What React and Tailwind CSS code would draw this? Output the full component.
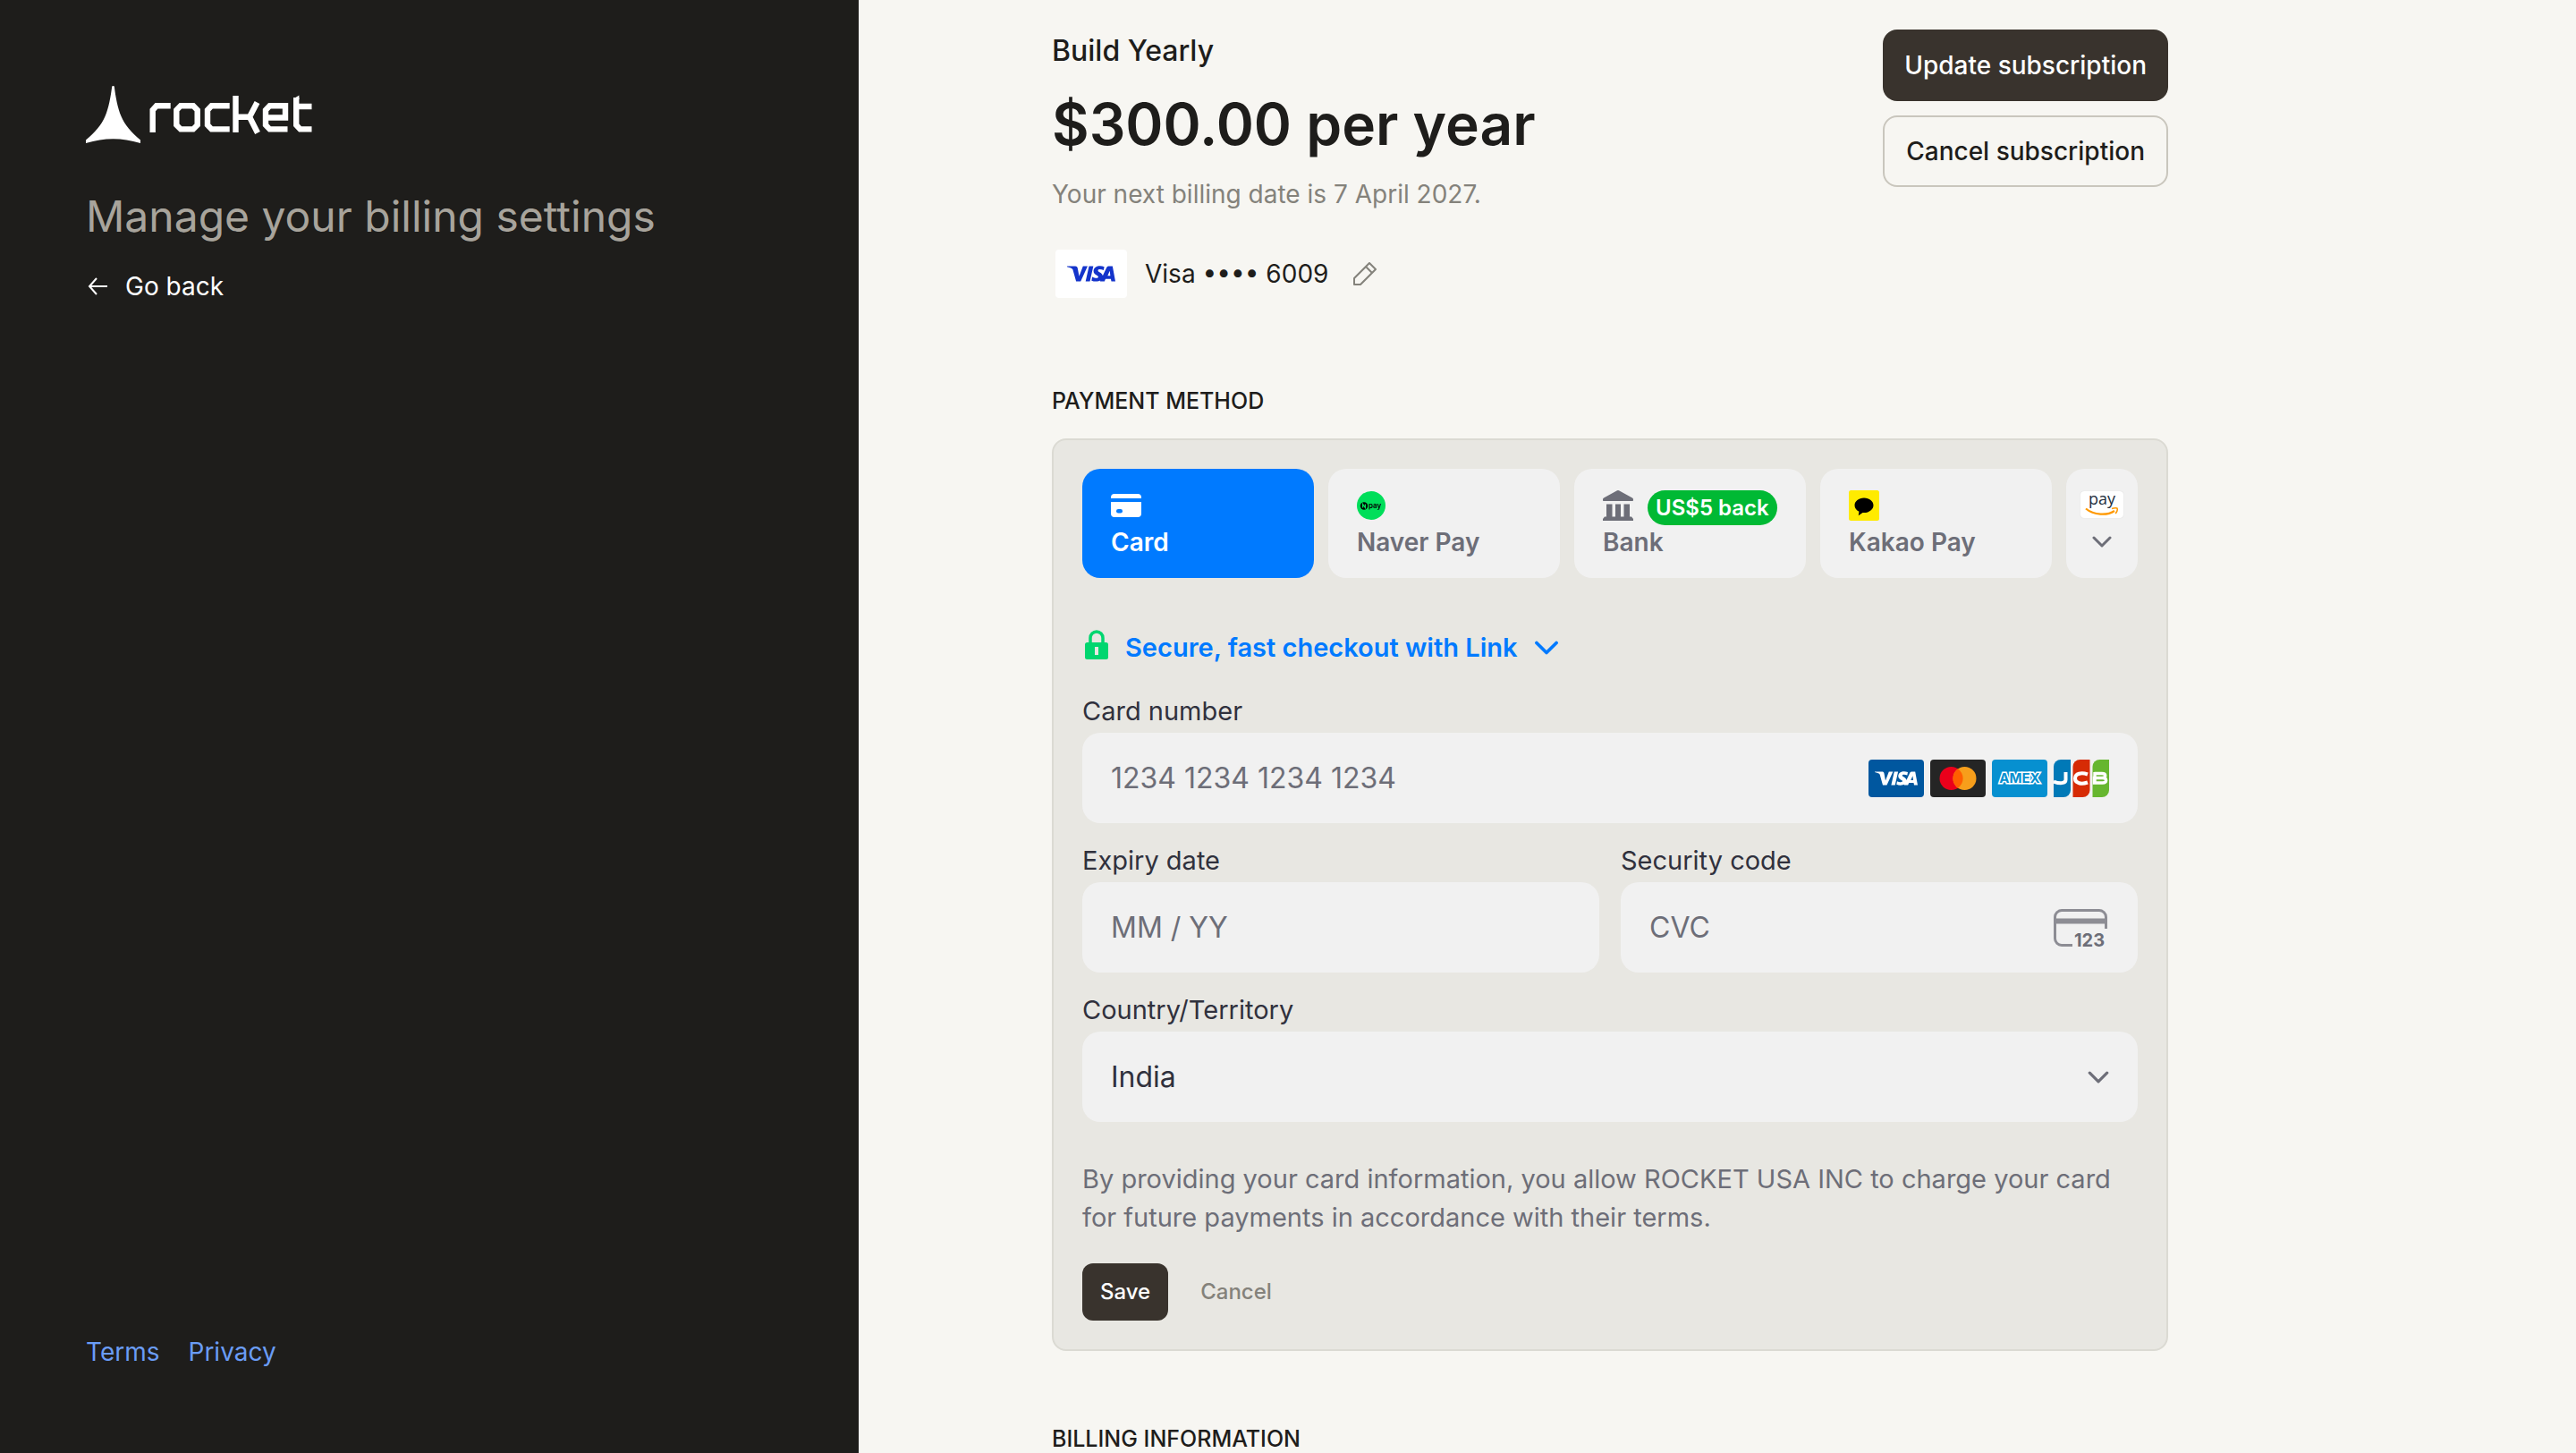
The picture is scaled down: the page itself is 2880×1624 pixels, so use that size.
function Chevron({ className }) {
  return (
    <svg viewBox="0 0 22 13" className={className} fill="none" stroke="currentColor" strokeWidth="3" strokeLinecap="round" strokeLinejoin="round" aria-hidden="true">
      <path d="M2 2l9 9 9-9" />
    </svg>
  );
}

function RocketLogo() {
  return (
    <svg viewBox="0 0 253 64" className="h-16 w-[253px]" fill="#fff" role="img" aria-label="rocket">
      <path d="M29.200.8C29.500-.3 31.500-.3 31.800.8 33.200 12 35.500 25 39.500 34c4 9.500 11 17.500 21.500 26.500V64c-11-3-20-4.700-30.500-4.700S11 61 0 64v-3.500C10.500 51.500 17.500 43.500 21.500 34 25.500 25 27.800 12 29.200.8Z" />
      <g fill="none" stroke="#fff" strokeWidth="6.400">
        <path d="M74.700 52V27L79 22.300H94.700" />
        <path d="M106 22.300H120L124.700 27V43.700L120 48.400H106L101.300 43.700V27Z" />
        <path d="M160.700 22.300H140.500L136 27V43.700L140.500 48.400H160.700" />
        <path d="M167.500 11V52M168 34.700H184M191.500 18.500L183 34.700 192 52.500" />
        <path d="M225.500 48.400H205.500L201 43.700V27L205.500 22.300H223V35.500H202" />
        <path d="M252.500 23H236M252.500 48.400H239.500L235.200 43.700V13" />
      </g>
      <path d="M232 14.500L238.400 10.500V15H232Z" />
    </svg>
  );
}

function VisaMark({ className }) {
  return (
    <svg viewBox="0 0 48 16" className={className} fill="currentColor" aria-hidden="true">
      <path d="M0 .5h8.200c1.200 0 2 .6 2.300 1.900L12 10.500 15.800.5h4.600L13.500 15.500H9L5.600 3.600C4.500 2.300 2 1.500 0 1.100ZM21.800.5h4.300l-3.400 15h-4.300ZM37 1l-.7 3.500c-3-1.300-5.600-1-5.600.3 0 1.500 4.800 2 4.800 5.700 0 5-6.500 6.200-11.200 4.300l.7-3.600c3.200 1.600 6 1.300 6-.1 0-1.700-4.700-1.900-4.700-5.700C26.300.4 32.400-.8 37 1ZM41.600.5h3.600L48 15.500h-4l-.5-2.400h-5.300l-1 2.400h-4.400L39.200 2c.4-1 1.200-1.500 2.400-1.500Zm.8 4.700-2.100 4.900H43Z" />
    </svg>
  );
}

function CardIcon() {
  return (
    <svg viewBox="0 0 34 26" className="h-[26px] w-[34px]" aria-hidden="true">
      <path fill="#fff" d="M0 5V4a4 4 0 0 1 4-4h26a4 4 0 0 1 4 4v1ZM0 9h34v13a4 4 0 0 1-4 4H4a4 4 0 0 1-4-4Z" />
      <rect x="6" y="17" width="7" height="4.500" rx="2.200" fill="#007aff" />
    </svg>
  );
}

function NaverIcon() {
  return (
    <svg viewBox="0 0 32 32" className="size-8" aria-hidden="true">
      <circle cx="16" cy="16" r="16" fill="#00de5a" />
      <circle cx="8" cy="16.500" r="4.200" fill="#000" />
      <path d="M6.600 18.500v-4l2.800 4v-4" fill="none" stroke="#00de5a" strokeWidth="1.300" />
      <text x="13" y="18.700" fill="#000" className="font-['Inter',sans-serif] text-[8px] font-semibold">pay</text>
    </svg>
  );
}

function BankIcon() {
  return (
    <svg viewBox="0 0 34 34" className="size-[34px]" fill="#6d6e78" aria-hidden="true">
      <path d="M16 .3a2 2 0 0 1 2 0l15 8.200c.7.400 1 .9 1 1.500v1c0 .6-.4 1-1 1H1c-.6 0-1-.4-1-1v-1c0-.6.300-1.100 1-1.500ZM4 15.500h6.500V30H4ZM14 15.500h6V30h-6ZM23.500 15.500H30V30h-6.500ZM2 29.500h30l2 2.500v2H0v-2Z" />
    </svg>
  );
}

function KakaoIcon() {
  return (
    <svg viewBox="0 0 34 34" className="size-[34px]" aria-hidden="true">
      <rect width="34" height="34" rx="2.500" fill="#ffeb00" />
      <path d="M17 8.500c6 0 10.500 3.700 10.500 8.200S23 25 17 25h-1.500l-4.700 3.200.6-4.500C8.300 22.300 6.500 19.700 6.500 16.700c0-4.500 4.500-8.200 10.500-8.200Z" />
    </svg>
  );
}

function AmazonPayIcon() {
  return (
    <span className="flex h-[30px] w-12 flex-col items-center rounded-sm bg-white shadow-[0_0_1px_#c8c8c8]">
      <span className="h-[18px] font-['Open_Sans',sans-serif] text-[18px] leading-[17px] text-[#232f3e]">pay</span>
      <svg viewBox="0 0 38 9" className="h-[9px] w-[38px]" fill="none" stroke="#ff9900" strokeWidth="2.200" aria-hidden="true">
        <path d="M1 1.500C10 9 25 9.500 33 4" />
        <path d="M30 1.500c3-1 6.500-.8 6-.2.600 1-.2 3.500-1.800 5.700" strokeWidth="1.600" />
      </svg>
    </span>
  );
}

function CardBrands() {
  return (
    <span className="flex gap-[7px]" aria-hidden="true">
      <span className="flex h-[42px] w-[62px] items-center justify-center rounded-sm bg-[#00579f]">
        <VisaMark className="h-4 w-12 text-white" />
      </span>
      <svg viewBox="0 0 62 42" className="h-[42px] w-[62px]">
        <rect width="62" height="42" rx="4" fill="#252525" />
        <circle cx="23.500" cy="21" r="13" fill="#eb001b" />
        <circle cx="38.500" cy="21" r="13" fill="#f79e1b" />
        <path d="M31 10.300a13 13 0 0 1 0 21.400 13 13 0 0 1 0-21.400Z" fill="#ff5f00" />
      </svg>
      <svg viewBox="0 0 62 42" className="h-[42px] w-[62px]">
        <rect width="62" height="42" rx="4" fill="#0690d0" />
        <text x="31" y="26" textAnchor="middle" fill="#0690d0" stroke="#fff" strokeWidth="3" paintOrder="stroke" className="font-['Inter',sans-serif] text-[15px] font-bold">AMEX</text>
      </svg>
      <svg viewBox="0 0 62 42" className="h-[42px] w-[62px]">
        <path d="M8 0h11v34a8 8 0 0 1-8 8H0V8a8 8 0 0 1 8-8Z" fill="#0079b7" />
        <path d="M29.500 0h11v34a8 8 0 0 1-8 8h-11V8a8 8 0 0 1 8-8Z" fill="#d62b05" />
        <path d="M51.500 0H62v34a8 8 0 0 1-8 8H43.500V8a8 8 0 0 1 8-8Z" fill="#66b62f" />
        <g fill="none" stroke="#fff" strokeWidth="4">
          <path d="M13.500 14v8.500c0 4.500-7 4.500-13.500 2" />
          <path d="M38 16.500c-7-2.500-14-1-14 4.500s7 7 14 4.500" />
          <path d="M45.500 15.500H54c5 0 5 5 0 5h-8.500M45.500 20.500h9c5.500 0 5.500 5.500 0 5.500h-9ZM46 14v13" strokeWidth="3.400" />
        </g>
      </svg>
    </span>
  );
}

function CvcIcon() {
  return (
    <svg viewBox="0 0 62 50" className="h-[50px] w-[62px]" aria-hidden="true">
      <path d="M58.500 26V13a7.500 7.500 0 0 0-7.500-7.500H9A7.500 7.500 0 0 0 1.500 13v24A7.500 7.500 0 0 0 9 44.500h12" fill="none" stroke="#8d8d94" strokeWidth="3" />
      <path d="M2 14.500h57v6H2Z" fill="#8d8d94" />
      <text x="23" y="46" fill="#6d6e78" className="font-['Inter',sans-serif] text-[20px] font-bold">123</text>
    </svg>
  );
}

const methods = [
  { name: "Card", icon: <CardIcon />, selected: true },
  { name: "Naver Pay", icon: <NaverIcon /> },
  { name: "Bank", icon: <BankIcon />, badge: "US$5 back" },
  { name: "Kakao Pay", icon: <KakaoIcon /> },
];

function MethodTab({ name, icon, badge, selected }) {
  return (
    <button
      type="button"
      role="tab"
      aria-selected={!!selected}
      className={
        "flex h-[122px] min-w-0 flex-1 flex-col items-start rounded-[20px] px-8 pt-6 text-left text-[28px] leading-8 font-semibold " +
        (selected ? "bg-[#007aff] text-white" : "bg-[#f1f1f1] text-[#6d6e78]")
      }
    >
      <span className="flex h-[34px] items-center gap-4">
        {icon}
        {badge && <span className="-mb-1 rounded-full bg-[#00b934] px-[9px] text-[24px] leading-[39px] text-white">{badge}</span>}
      </span>
      <span className="pt-2">{name}</span>
    </button>
  );
}

const fieldBox = "flex h-[101px] items-center rounded-[20px] bg-[#f1f1f1] px-8";
const fieldText = "min-w-0 flex-1 appearance-none bg-transparent text-[32px] text-[#30313d] outline-none placeholder:text-[#6d6e78]";
const labelText = "block text-[29px] leading-9 text-[#30313d] pb-[6px]";

function Field({ id, label, placeholder, children }) {
  return (
    <div className="min-w-0 flex-1">
      <label htmlFor={id} className={labelText}>{label}</label>
      <div className={fieldBox}>
        <input id={id} type="text" placeholder={placeholder} className={fieldText} />
        {children}
      </div>
    </div>
  );
}

export default function App() {
  return (
    <div className="flex h-screen overflow-hidden bg-[#f7f6f2] font-['Inter',sans-serif] text-[#1e1d1b]">
      <aside className="flex w-1/3 shrink-0 flex-col bg-[#1e1d1b] px-24 pt-24 pb-[93px]">
        <RocketLogo />
        <h1 className="mt-[52px] text-[48px] leading-[60px] text-[#a8a49c]">Manage your billing settings</h1>
        <a href="#back" className="mt-7 flex items-center gap-5 text-[28px] leading-10 text-white">
          <svg viewBox="0 0 24 24" className="size-6" fill="none" stroke="currentColor" strokeWidth="2" aria-hidden="true">
            <path d="M25 12H4M12 3L4 12l8 9" />
          </svg>
          Go back
        </a>
        <nav className="mt-auto flex gap-8 text-[28px] leading-10 text-[#6a9cf5]">
          <a href="#terms">Terms</a>
          <a href="#privacy">Privacy</a>
        </nav>
      </aside>

      <main className="min-w-0 flex-1 pr-24 pl-[216px]">
        <div className="w-full max-w-[1248px]">
          <section className="flex items-start justify-between pt-[33px]">
            <div>
              <h2 className="text-[32px] leading-12 font-medium">Build Yearly</h2>
              <p className="mt-5 text-[64px] leading-[76px] font-semibold">$300.00 per year</p>
              <p className="mt-5 text-[28px] leading-10 text-[#84827b]">Your next billing date is 7 April 2027.</p>
              <div className="mt-[42px] flex items-center pl-1 text-[28px] leading-[54px]">
                <span className="flex h-[54px] w-20 items-center justify-center rounded-sm bg-white text-[#1434cb]">
                  <VisaMark className="h-[18px] w-[54px]" />
                </span>
                <span className="ml-5">Visa •••• 6009</span>
                <button type="button" aria-label="Edit" className="ml-7 text-[#84827b]">
                  <svg viewBox="0 0 26 26" className="size-[26px]" fill="none" stroke="currentColor" strokeWidth="2" strokeLinejoin="round" aria-hidden="true">
                    <path d="M1 18L18 1l7 7L8 25H1ZM14 5l7 7" />
                  </svg>
                </button>
              </div>
            </div>
            <div className="flex flex-col gap-4 text-[28px] font-medium">
              <button type="button" className="h-20 rounded-2xl bg-[#39332d] px-6 text-white">Update subscription</button>
              <button type="button" className="h-20 rounded-2xl border-2 border-[#c9c6bd] px-6">Cancel subscription</button>
            </div>
          </section>

          <h2 className="mt-[99px] text-[25px] leading-8 font-medium">PAYMENT METHOD</h2>
          <form className="mt-[26px] rounded-2xl border-2 border-[#dbdad3] bg-[#e8e7e2] p-8">
            <div role="tablist" className="flex gap-4">
              {methods.map((m) => (
                <MethodTab key={m.name} {...m} />
              ))}
              <button type="button" aria-label="More payment methods" className="flex h-[122px] w-20 flex-col items-center rounded-[20px] bg-[#f1f1f1] pt-[25px] text-[#6d6e78]">
                <AmazonPayIcon />
                <Chevron className="mt-5 h-[13px] w-[22px]" />
              </button>
            </div>

            <button type="button" className="mt-[58px] flex items-center text-[29px] leading-10 font-semibold text-[#007aff]">
              <svg viewBox="0 0 28 40" className="ml-[2px] h-10 w-7" aria-hidden="true">
                <path d="M7 14V9a7 7 0 0 1 14 0v5" fill="none" stroke="#00d66f" strokeWidth="3.500" />
                <rect x="1" y="14" width="26" height="19" rx="2.500" fill="#00d66f" />
                <rect x="12" y="19" width="4" height="9" fill="#e8e7e2" />
              </svg>
              <span className="ml-[18px]">Secure, fast checkout with Link</span>
              <Chevron className="ml-[18px] h-4 w-7" />
            </button>

            <div className="mt-[33px] flex flex-col gap-6">
              <Field id="number" label="Card number" placeholder="1234 1234 1234 1234">
                <CardBrands />
              </Field>
              <div className="flex gap-6">
                <Field id="expiry" label="Expiry date" placeholder="MM / YY" />
                <Field id="cvc" label="Security code" placeholder="CVC">
                  <CvcIcon />
                </Field>
              </div>
              <div>
                <label htmlFor="country" className={labelText}>Country/Territory</label>
                <div className={fieldBox}>
                  <select id="country" className={fieldText}>
                    <option>India</option>
                  </select>
                  <Chevron className="pointer-events-none h-[14px] w-6 text-[#6d6e78]" />
                </div>
              </div>
            </div>

            <p className="mt-[42px] text-[29px] leading-[43px] text-[#6d6e78]">
              By providing your card information, you allow ROCKET USA INC to charge your card for future payments in accordance with their terms.
            </p>
            <div className="mt-[30px] flex items-center gap-4 text-[24px] font-medium">
              <button type="button" className="h-16 rounded-xl bg-[#39332d] px-5 text-white">Save</button>
              <button type="button" className="h-16 px-5 text-[#84827b]">Cancel</button>
            </div>
          </form>

          <h2 className="mt-[82px] text-[25px] leading-8 font-medium">BILLING INFORMATION</h2>
        </div>
      </main>
    </div>
  );
}
